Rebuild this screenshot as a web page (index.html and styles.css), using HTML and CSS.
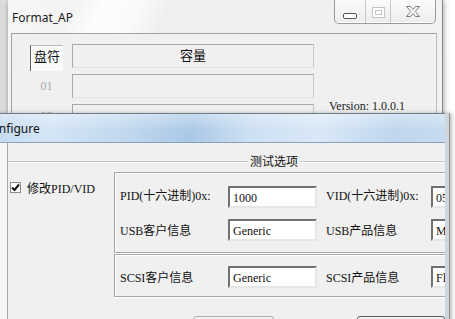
FILE: index.html
```html
<html>
	<head>
		<link rel="stylesheet" href="styles.css">
	</head>
	<body>
		<div class="desk">
			<div class="win back">
				<div class="caption">
					<span class="title">Format_AP</span>
					<div class="ctl">
						<span class="cbtn">
							<svg width="14" height="6" viewBox="0 0 14 6"><rect x="0.5" y="0.5" width="13" height="5" rx="1.5" fill="#fff" stroke="#555"/></svg>
						</span>
						<span class="cbtn">
							<svg width="13" height="11" viewBox="0 0 13 11"><rect x="0.5" y="0.5" width="12" height="10" fill="#fff" stroke="#c4c4c4"/><rect x="3.5" y="3.5" width="6" height="4" fill="none" stroke="#c4c4c4"/></svg>
						</span>
						<span class="cbtn wide">
							<svg width="14" height="11" viewBox="0 0 14 11"><polygon points="0.5,0.5 4.5,0.5 7,3.5 9.5,0.5 13.5,0.5 9.2,5.5 13.5,10.5 9.5,10.5 7,7.5 4.5,10.5 0.5,10.5 4.8,5.5" fill="#fff" stroke="#7a7a7a"/></svg>
						</span>
					</div>
				</div>
				<div class="client list">
					<div class="hd drive">盘符</div>
					<div class="hd cap">容量</div>
					<div class="num">01</div>
					<div class="cell"></div>
					<div class="num">02</div>
					<div class="cell"></div>
					<div class="ver">Version: 1.0.0.1</div>
				</div>
			</div>

			<div class="win front">
				<div class="caption blue"><span class="title">Configure</span></div>
				<div class="client cfg">
					<div class="panel">
						<div class="legend"><span class="rule short"></span><span class="legend-text">测试选项</span><span class="rule"></span></div>
						<div class="body">
							<div class="chk">
								<span class="box"><svg width="9" height="9" viewBox="0 0 9 9"><path d="M1 4.5 L3.5 7 L8 1.5" fill="none" stroke="#111" stroke-width="2"/></svg></span>
								<span>修改PID/VID</span>
							</div>
							<div class="groups">
								<div class="grp first">
									<span class="lbl up">PID(十六进制)0x:</span>
									<span class="field">1000</span>
									<span class="lbl two up">VID(十六进制)0x:</span>
									<span class="field">0583</span>
									<span class="lbl">USB客户信息</span>
									<span class="field">Generic</span>
									<span class="lbl two">USB产品信息</span>
									<span class="field">Mass Storage</span>
								</div>
								<div class="grp second">
									<span class="lbl">SCSI客户信息</span>
									<span class="field">Generic</span>
									<span class="lbl two">SCSI产品信息</span>
									<span class="field">Flash Disk</span>
								</div>
							</div>
						</div>
						<div class="btns">
							<span class="btn"></span>
							<span class="btn def"></span>
						</div>
					</div>
				</div>
			</div>
		</div>
	</body>
</html>
```

FILE: styles.css
```css
* {
	box-sizing: border-box;
	padding: 0;
	margin: 0;
}
body {
	background: #fff;
	font-family: "Liberation Serif", "Noto Sans CJK SC", serif;
	font-size: 12px;
	color: #111;
}
.desk {
	position: relative;
	width: 455px;
	height: 319px;
	overflow: hidden;
	background: linear-gradient(to right, #d8d8d8, #f2f2f2 8px, #fff 12px);
}

/* windows */
.win {
	position: absolute;
}
.back {
	left: 8px;
	top: 0;
	width: 435px;
	height: 150px;
	background: linear-gradient(115deg, #f7f7f7 0, #f3f3f3 60px, #fdfdfd 90px, #fafafa 120px, #efefef 150px, #f2f2f2 100%);
	box-shadow: 0 0 6px rgba(0, 0, 0, .45);
	border-right: 1px solid #8a8a8a;
}
.caption {
	display: flex;
	height: 33px;
}
.caption .title {
	font-family: "Noto Sans", sans-serif;
	font-size: 12px;
	color: #1b1b1b;
	padding: 9px 0 0 4px;
}
.ctl {
	display: flex;
	margin-left: auto;
	margin-right: 6px;
	height: 24px;
	border: 1px solid #9a9a9a;
	border-top: none;
	border-radius: 0 0 5px 5px;
	background: linear-gradient(#fbfbfb, #ececec);
	box-shadow: inset 0 -1px 0 #fff;
}
.cbtn {
	display: flex;
	align-items: center;
	justify-content: center;
	width: 25px;
	border-left: 1px solid #c8c8c8;
	padding-top: 2px;
}
.cbtn:first-child {
	width: 30px;
	border-left: none;
	padding-top: 8px;
}
.cbtn.wide {
	width: 45px;
	padding-top: 0;
}

.client {
	background: #f0f0f0;
}
.list {
	display: grid;
	grid-template-columns: 33px 242px auto;
	grid-template-rows: 24px 24px 24px;
	column-gap: 9px;
	row-gap: 6px;
	margin: 0 5px 0 3px;
	height: 110px;
	padding: 10px 0 0 18px;
	border-top: 1px solid #a2a2a2;
	border-left: 1px solid #a2a2a2;
	border-right: 1px solid #bcbcbc;
}
.hd {
	font-family: "Noto Sans CJK SC", sans-serif;
	font-size: 13px;
	line-height: 20px;
	text-align: center;
}
.drive {
	height: 26px;
	margin-top: 1px;
	background: #fafafa;
	border-top: 1px solid #b8b8b8;
	border-left: 1px solid #5e5e5e;
}
.cap,
.cell {
	border: 1px solid;
	border-color: #a8a8a8 #c8c8c8 #e4e4e4 #a8a8a8;
}
.num {
	grid-column: 1;
	text-align: center;
	color: #a8a8a8;
	line-height: 24px;
}
.ver {
	grid-column: 3;
	grid-row: 3;
	margin: -5px 0 0 6px;
	line-height: 14px;
	color: #222;
}

.front {
	left: -10px;
	top: 113px;
	width: 459px;
	height: 220px;
	background: #f0f0f0;
	border-right: 4px solid #cfd6dd;
	box-shadow: 1px 0 0 #8d8d8d, 3px 0 4px rgba(0, 0, 0, .25);
}
.blue {
	height: 30px;
	border-top: 1px solid #6f7c89;
	border-bottom: 1px solid #8aa3bb;
	background:
		linear-gradient(rgba(255, 255, 255, .35), rgba(255, 255, 255, 0) 60%),
		linear-gradient(100deg, #c3d9ef 0, #d4e5f6 60px, #c0d7ee 140px, #aac8e6 200px, #cde0f3 260px, #d9e8f7 330px, #bfd6ee 400px, #c6dbf0 100%);
}
.blue .title {
	padding: 6px 0 0 0;
	margin-left: -6px;
	color: #111;
}
.cfg {
	height: 190px;
	background: linear-gradient(to right, #f6f6f6 17px, #f0f0f0 17px);
}
.panel {
	margin-left: 17px;
	height: 100%;
	border-left: 1px solid #a7a7a7;
	overflow: hidden;
	padding-top: 11px;
}
.legend {
	display: flex;
	align-items: center;
	height: 14px;
	margin-top: 1px;
}
.rule {
	flex: 1;
	border-top: 1px solid #c6c6c6;
	border-bottom: 1px solid #fff;
}
.rule.short {
	flex: 0 0 240px;
}
.legend-text {
	padding: 0 2px;
	font-size: 12px;
	line-height: 14px;
}
.body {
	display: flex;
	margin-top: 3px;
}
.chk {
	display: flex;
	align-items: center;
	flex: 0 0 106px;
	height: 11px;
	margin-top: 10px;
	padding-left: 2px;
	gap: 6px;
	white-space: nowrap;
}
.box {
	display: flex;
	align-items: center;
	justify-content: center;
	width: 11px;
	height: 11px;
	border: 1px solid #8e8e8e;
	background: #fff;
}
.groups {
	flex: 0 0 500px;
}
.grp {
	display: grid;
	grid-template-columns: 108px 89px 114px 89px;
	grid-auto-rows: 22px;
	padding-left: 5px;
	border: 1px solid #a6a6a6;
	box-shadow: inset 1px 1px 0 #fff, 0 1px 0 #fff;
	align-items: center;
	white-space: nowrap;
}
.first {
	row-gap: 11px;
	padding: 13px 0 11px 5px;
}
.second {
	margin-top: 1px;
	padding: 11px 0 8px 5px;
}
.lbl.up {
	margin-top: -5px;
}
.lbl.two {
	padding-left: 9px;
}
.field {
	height: 22px;
	padding: 2px 0 0 3px;
	background: #fff;
	border: 2px solid;
	border-color: #707070 #e6e6e6 #e6e6e6 #707070;
	line-height: 16px;
	overflow: hidden;
}
.btns {
	display: flex;
	gap: 83px;
	margin: 19px 0 0 185px;
}
.btn {
	width: 83px;
	height: 23px;
	border: 1px solid #adadad;
	border-radius: 3px;
	background: linear-gradient(#f2f2f2, #e0e0e0);
}
.btn.def {
	width: 90px;
	border-color: #5c5c5c;
}
```
